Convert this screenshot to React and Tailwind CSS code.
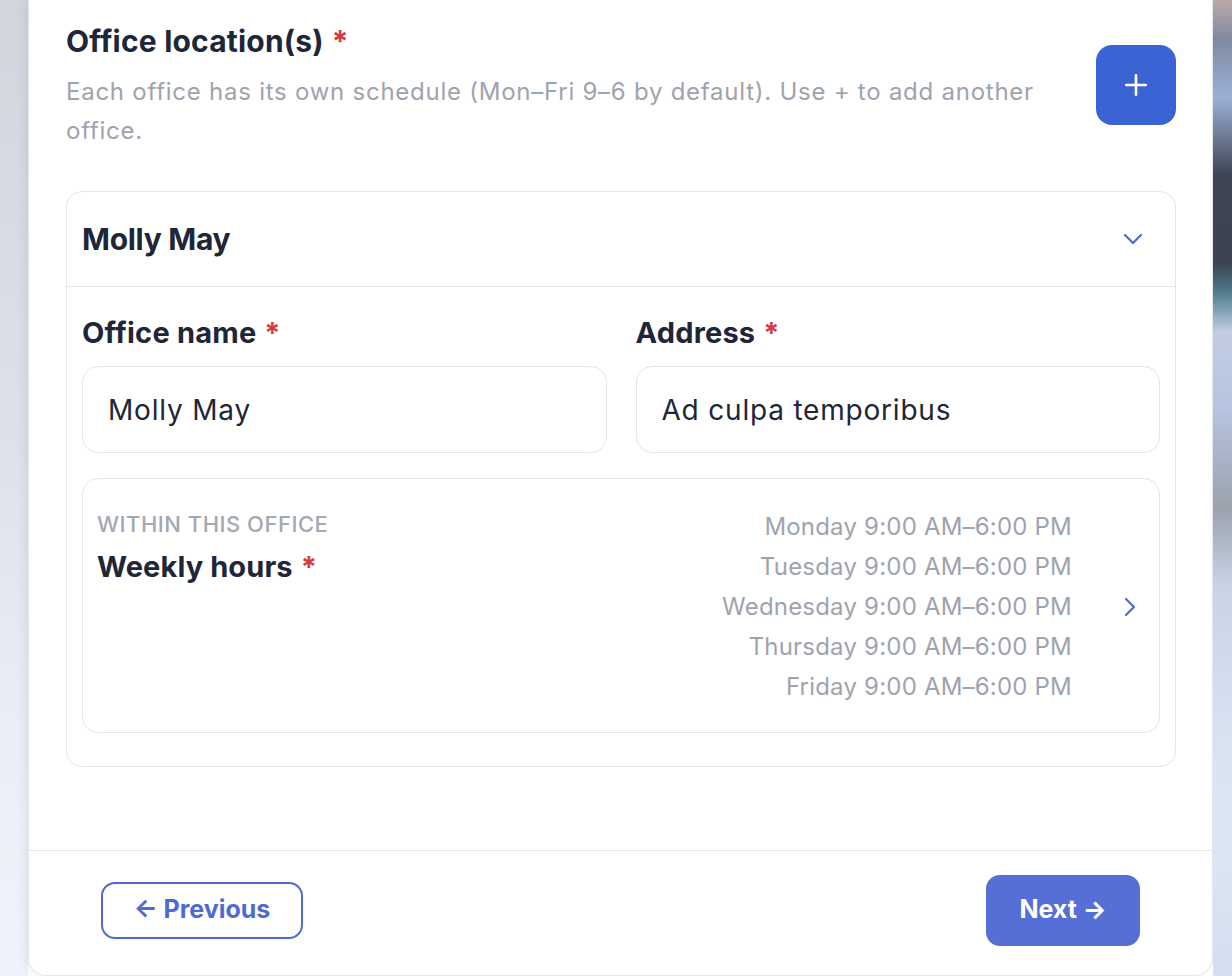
import React from "react";

const FONT = { fontFamily: "Inter, 'Noto Sans', sans-serif" };

function Star() {
  return <span className="text-[#d63a3d] ml-[8px]">*</span>;
}

function ChevronDown() {
  return (
    <svg width="20" height="12" viewBox="0 0 20 12" fill="none" stroke="#4f66d8" strokeWidth="2.2" strokeLinecap="round" strokeLinejoin="round">
      <path d="M2 2l8 8 8-8" />
    </svg>
  );
}

function ChevronRight() {
  return (
    <svg width="12" height="20" viewBox="0 0 12 20" fill="none" stroke="#4f66d8" strokeWidth="2.2" strokeLinecap="round" strokeLinejoin="round">
      <path d="M2 2l8 8-8 8" />
    </svg>
  );
}

function Field({ label, value }) {
  return (
    <div className="flex-1 flex flex-col">
      <div className="text-[29px] leading-[39px] font-bold text-[#1e2638] tracking-[0.2px]">
        {label}
        <Star />
      </div>
      <div className="mt-[14px] h-[87px] rounded-[16px] border-[1.5px] border-[#e3e5ea] flex items-center pl-[25px] text-[28px] tracking-[0.8px] text-[#1e2638]">
        {value}
      </div>
    </div>
  );
}

const days = ["Monday", "Tuesday", "Wednesday", "Thursday", "Friday"];

export default function App() {
  return (
    <div className="w-full h-[976px] flex overflow-hidden" style={FONT}>
      {/* backdrop, left */}
      <div className="w-[28px] h-full bg-[linear-gradient(180deg,#d3d5dd_0%,#dde1ea_45%,#eaeef7_75%,#eff3fb_100%)]" />

      {/* main card */}
      <div className="flex-1 h-full bg-white border-x border-b border-[#e4e6eb] rounded-b-[18px] flex flex-col shadow-[-4px_0_8px_rgba(0,0,0,0.06)]">
        <div className="flex-1 pl-[37px] pr-[36px] pt-[22px]">
          {/* section heading */}
          <div className="flex items-start justify-between">
            <div className="w-[990px]">
              <div className="text-[30px] leading-[39px] font-bold text-[#1e2638] tracking-[0.2px]">
                Office location(s)
                <Star />
              </div>
              <p className="mt-[11px] text-[24px] leading-[39px] text-[#9ea3ae] tracking-[0.75px]">
                Each office has its own schedule (Mon–Fri 9–6 by default). Use + to add another office.
              </p>
            </div>
            <button className="mt-[23px] w-[80px] h-[80px] rounded-[16px] bg-[#3b63d3] flex items-center justify-center">
              <svg width="26" height="26" viewBox="0 0 24 24" fill="none" stroke="white" strokeWidth="2.4" strokeLinecap="round">
                <path d="M12 3v18M3 12h18" />
              </svg>
            </button>
          </div>

          {/* office accordion */}
          <div className="mt-[41px] rounded-[16px] border-[1.5px] border-[#e3e5ea]">
            <div className="h-[95px] px-[15px] flex items-center justify-between border-b-[1.5px] border-[#e3e5ea]">
              <div className="text-[30px] font-bold text-[#1e2638] tracking-[-0.3px]">Molly May</div>
              <div className="mr-[17px] flex">
                <ChevronDown />
              </div>
            </div>
            <div className="px-[15px] pt-[26px] pb-[33px]">
              <div className="flex gap-[29px]">
                <Field label="Office name" value="Molly May" />
                <Field label="Address" value="Ad culpa temporibus" />
              </div>

              {/* weekly hours summary */}
              <div className="mt-[25px] rounded-[16px] border-[1.5px] border-[#e3e5ea] flex items-start pl-[14px] pr-[23px] pt-[28px] pb-[25px]">
                <div className="flex-1 pt-[2px]">
                  <div className="text-[22px] leading-[30px] font-medium text-[#a3a8b3] uppercase tracking-[0.5px]">Within this office</div>
                  <div className="mt-[8px] text-[29px] leading-[39px] font-bold text-[#1e2638] tracking-[0.1px]">
                    Weekly hours
                    <Star />
                  </div>
                </div>
                <div className="flex flex-col items-end text-[24px] leading-[40px] text-[#9ea3ae] tracking-[0.2px]">
                  {days.map((d) => (
                    <div key={d}>{d} 9:00 AM–6:00 PM</div>
                  ))}
                </div>
                <div className="self-center ml-[52px] flex">
                  <ChevronRight />
                </div>
              </div>
            </div>
          </div>
        </div>

        {/* step navigation */}
        <div className="h-[125px] border-t-[1.5px] border-[#e4e6eb] flex items-center justify-between px-[72px] pb-[6px]">
          <button className="h-[57px] w-[202px] rounded-[14px] border-2 border-[#4f6ad4] text-[#4f6ad4] text-[25px] font-bold flex items-center justify-center">
            ← Previous
          </button>
          <button className="h-[71px] w-[154px] rounded-[14px] bg-[#556fd7] text-white text-[25px] font-bold flex items-center justify-center">
            Next →
          </button>
        </div>
      </div>

      {/* backdrop, right */}
      <div className="w-[19px] h-full bg-[linear-gradient(180deg,#bba9ab_0%,#7f8aa0_4%,#9cb0d6_10%,#3d4452_18%,#3b4350_27%,#4f7d8c_30%,#c2cde4_34%,#b7c3df_42%,#9aa2ad_52%,#c9d3e6_60%,#d9e2f1_75%,#dde6f3_86%,#d3deef_100%)]" />
    </div>
  );
}
